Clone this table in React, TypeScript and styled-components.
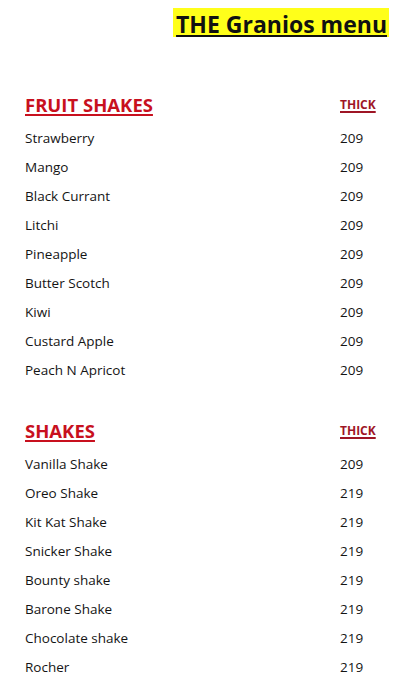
import React from 'react'
import styled, { createGlobalStyle } from 'styled-components'

const GlobalStyle = createGlobalStyle`
  html, body {
    margin: 0;
    padding: 0;
    background: #ffffff;
  }
  body {
    font-family: 'Open Sans', 'Noto Sans', sans-serif;
    color: #141414;
  }
`

const Page = styled.div`
  width: 420px;
  height: 700px;
  overflow: hidden;
  background: #fff;
  display: flex;
  flex-direction: column;
`

const TitleRow = styled.div`
  display: flex;
  justify-content: flex-end;
  padding: 8px 31px 0 0;
`

const Title = styled.h1`
  margin: 0;
  background: #ffff1a;
  padding: 3px 2px 0 3px;
  font-size: 23px;
  font-weight: 700;
  line-height: 26px;
  color: #111;
  text-decoration: underline;
  text-decoration-thickness: 2px;
  text-underline-offset: 2px;
`

const Section = styled.section<{ $top: number }>`
  margin-top: ${(p) => p.$top}px;
  padding: 0 42px 0 25px;
  display: flex;
  flex-direction: column;
`

const SectionHead = styled.div`
  display: flex;
  justify-content: space-between;
  align-items: flex-start;
  height: 30px;
`

const SectionTitle = styled.h2`
  margin: 0;
  font-size: 18.5px;
  font-weight: 700;
  color: #c8101e;
  text-decoration: underline;
  text-decoration-thickness: 2px;
  text-underline-offset: 2px;
  line-height: 22px;
`

const ColLabel = styled.span`
  width: 38px;
  margin-top: 3px;
  font-size: 12px;
  font-weight: 700;
  color: #9e1525;
  text-decoration: underline;
  text-decoration-thickness: 1.5px;
  text-underline-offset: 2px;
  line-height: 16px;
`

const Row = styled.div`
  display: flex;
  justify-content: space-between;
  height: 29px;
  line-height: 29px;
  font-size: 13.5px;
`

const Name = styled.span``

const Price = styled.span`
  width: 38px;
`

type Item = [string, number]

const fruit: Item[] = [
  ['Strawberry', 209],
  ['Mango', 209],
  ['Black Currant', 209],
  ['Litchi', 209],
  ['Pineapple', 209],
  ['Butter Scotch', 209],
  ['Kiwi', 209],
  ['Custard Apple', 209],
  ['Peach N Apricot', 209],
]

const shakes: Item[] = [
  ['Vanilla Shake', 209],
  ['Oreo Shake', 219],
  ['Kit Kat Shake', 219],
  ['Snicker Shake', 219],
  ['Bounty shake', 219],
  ['Barone Shake', 219],
  ['Chocolate shake', 219],
  ['Rocher', 219],
]

const MenuSection: React.FC<{ title: string; items: Item[]; top: number }> = ({ title, items, top }) => (
  <Section $top={top}>
    <SectionHead>
      <SectionTitle>{title}</SectionTitle>
      <ColLabel>THICK</ColLabel>
    </SectionHead>
    {items.map(([name, price]) => (
      <Row key={name}>
        <Name>{name}</Name>
        <Price>{price}</Price>
      </Row>
    ))}
  </Section>
)

export default function App() {
  return (
    <>
      <GlobalStyle />
      <Page>
        <TitleRow>
          <Title>THE Granios menu</Title>
        </TitleRow>
        <MenuSection title="FRUIT SHAKES" items={fruit} top={57} />
        <MenuSection title="SHAKES" items={shakes} top={35} />
      </Page>
    </>
  )
}
